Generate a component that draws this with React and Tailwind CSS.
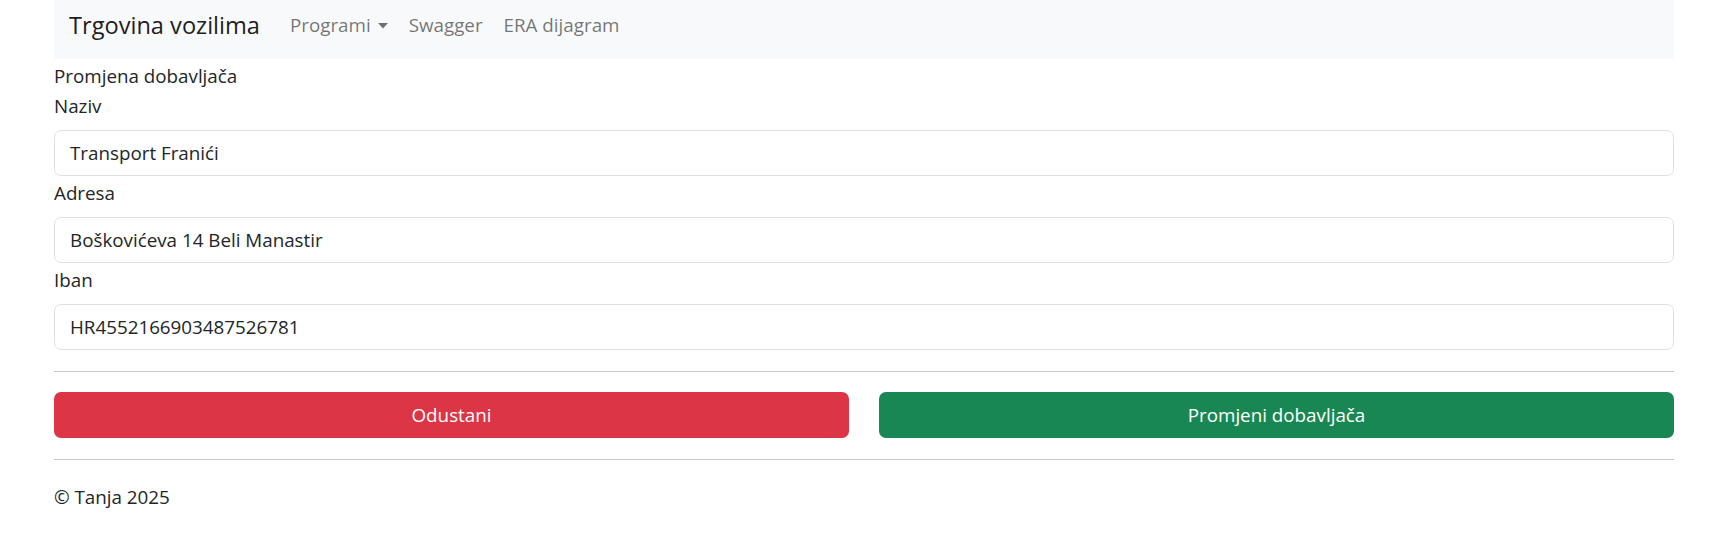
import React from "react";

const fields = [
  { label: "Naziv", value: "Transport Franići" },
  { label: "Adresa", value: "Boškovićeva 14 Beli Manastir" },
  { label: "Iban", value: "HR4552166903487526781" },
];

export default function App() {
  return (
    <div
      className="min-h-[537px] bg-white text-[#212529] text-[18.8px] leading-[26px]"
      style={{ fontFamily: '"Open Sans", "Noto Sans", sans-serif' }}
    >
      <div className="ml-[54px] w-[1620px]">
        {/* navbar */}
        <nav className="h-[59px] bg-[#f8f9fa] flex items-center pb-[9px] pl-[15px]">
          <span className="text-[23.6px] text-black/90 mr-[30px]">Trgovina vozilima</span>
          <div className="flex items-center gap-[21px] text-black/55">
            <span className="flex items-center gap-[7px]">
              Programi
              <svg width="10" height="6" viewBox="0 0 10 6" className="mt-[1px]">
                <path d="M0 0h10L5 5.5z" fill="currentColor" />
              </svg>
            </span>
            <span>Swagger</span>
            <span>ERA dijagram</span>
          </div>
        </nav>

        {/* form */}
        <div className="flex flex-col gap-[4px] mt-[4px]">
          <div>Promjena dobavljača</div>
          {fields.map((f) => (
            <div key={f.label} className="flex flex-col">
              <label className="mb-[11px]">{f.label}</label>
              <div className="h-[46px] border border-[#dee2e6] rounded-[7px] flex items-center px-[15px]">
                {f.value}
              </div>
            </div>
          ))}
        </div>

        <hr className="mt-[21px] border-0 border-t border-[#c8c9ca]" />

        <div className="grid grid-cols-2 gap-[30px] mt-[20px]">
          <button className="h-[46px] rounded-[7px] bg-[#dc3545] text-white">Odustani</button>
          <button className="h-[46px] rounded-[7px] bg-[#198754] text-white">Promjeni dobavljača</button>
        </div>

        <hr className="mt-[21px] border-0 border-t border-[#c8c9ca]" />

        <footer className="mt-[24px]">© Tanja 2025</footer>
      </div>
    </div>
  );
}
